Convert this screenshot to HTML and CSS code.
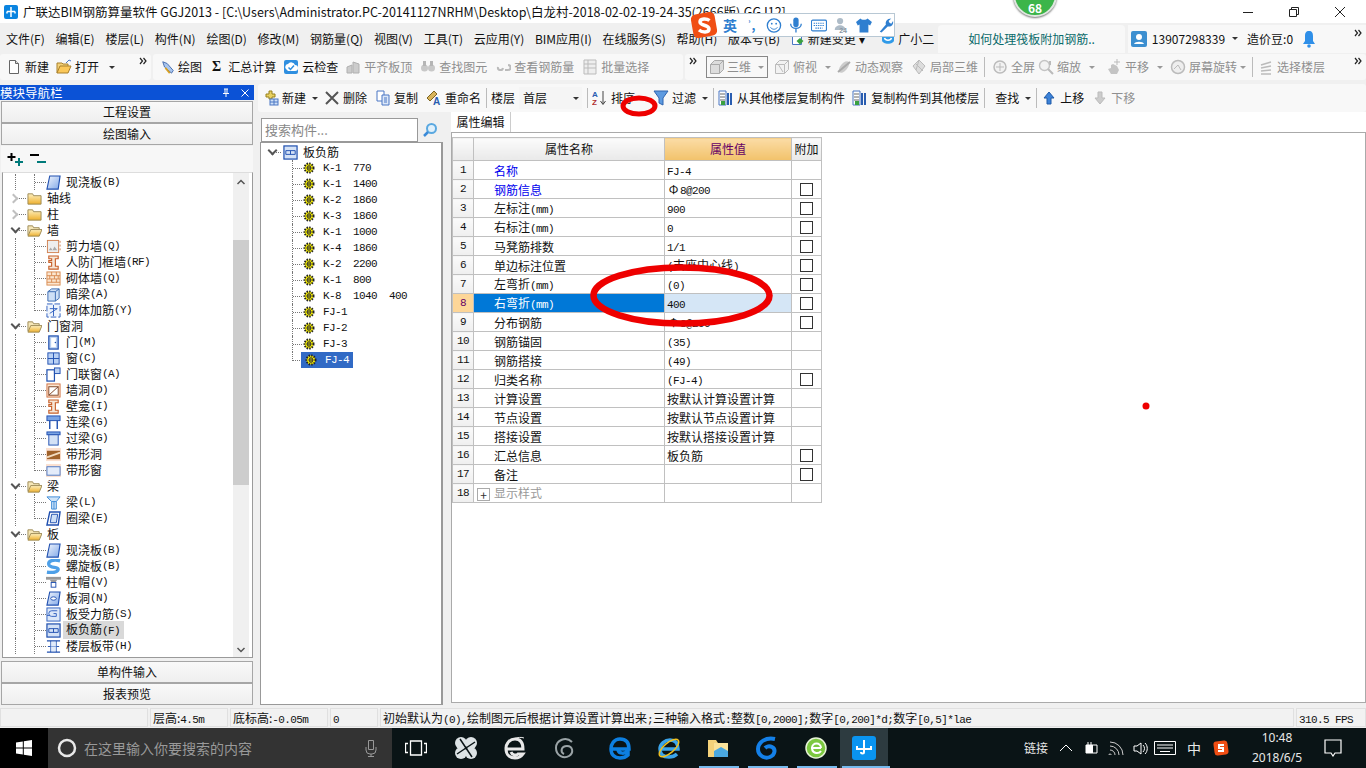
FILE: index.html
```html
<!DOCTYPE html>
<html lang="zh-CN">
<head>
    <meta charset="UTF-8">
    <title>广联达BIM钢筋算量软件 GGJ2013</title>
    <link rel="stylesheet" href="styles.css">
</head>
<body>
    <!-- 图标 -->
    <svg class="defs" width="0" height="0">
        <symbol id="i-doc" viewBox="0 0 16 16"><path d="M3.500 1.500h6l3 3v10h-9z" fill="#fff" stroke="#666"/><path d="M9.500 1.500v3h3" fill="#ddd" stroke="#666"/></symbol>
        <symbol id="i-open" viewBox="0 0 16 16"><path d="M1 14V4h5l1 1h5v2" fill="#f4d27a" stroke="#a9802c"/><path d="M1 14l3-7h11l-3 7z" fill="#fbc85a" stroke="#a9802c"/><path d="M10 4l3-3 2 1" fill="none" stroke="#4a77c4"/></symbol>
        <symbol id="i-draw" viewBox="0 0 16 16"><path d="M2 2l5 2 7 8-2 3-8-7z" fill="#a9c6ee" stroke="#3c63a8"/><path d="M5 9l5 6" stroke="#d8a020" stroke-width="2"/></symbol>
        <symbol id="i-cloud" viewBox="0 0 16 16"><rect x="1" y="1" width="14" height="14" rx="2" fill="#2f8fe0"/><path d="M3 10a3 3 0 0 1 2-5 4 4 0 0 1 7 1 3 3 0 0 1 0 6H5z" fill="#fff"/><path d="M5.500 8.500l2 2 3.500-4" stroke="#2f8fe0" stroke-width="1.500" fill="none"/></symbol>
        <symbol id="i-gray1" viewBox="0 0 16 16"><path d="M2 14V8l5-2v8zM8 14V3l6 2v9z" fill="#ccc" stroke="#b0b0b0"/></symbol>
        <symbol id="i-gray2" viewBox="0 0 16 16"><circle cx="4.500" cy="9" r="3.500" fill="#c8c8c8"/><circle cx="11.500" cy="9" r="3.500" fill="#c8c8c8"/><path d="M3 2h3v5H3zM10 2h3v5h-3z" fill="#b5b5b5"/></symbol>
        <symbol id="i-gray3" viewBox="0 0 16 16"><path d="M3 8a2.500 2.500 0 1 0 5 1M10 11h3a2 2 0 0 0 0-5" fill="none" stroke="#bbb" stroke-width="2"/></symbol>
        <symbol id="i-gray4" viewBox="0 0 16 16"><path d="M2 1h12v14H2zM2 5h12M2 9h12M6 1v14" fill="#eee" stroke="#bbb"/></symbol>
        <symbol id="i-cube" viewBox="0 0 16 16"><path d="M1.500 5.500l4-4h9v9l-4 4h-9z" fill="#ddd" stroke="#aaa"/><path d="M1.500 5.500h9v9M10.500 5.500l4-4" fill="none" stroke="#aaa"/></symbol>
        <symbol id="i-cube2" viewBox="0 0 16 16"><path d="M1.500 5.500l4-4h9v9l-4 4h-9z" fill="#f2f2f2" stroke="#bbb"/><path d="M1.500 5.500h9v9M10.500 5.500l4-4M4 5l5 8" fill="none" stroke="#bbb"/></symbol>
        <symbol id="i-orbit" viewBox="0 0 16 16"><ellipse cx="8" cy="8" rx="3.500" ry="7" transform="rotate(40 8 8)" fill="#ccc"/><path d="M2 13L14 3" stroke="#aaa" stroke-width="2"/></symbol>
        <symbol id="i-local" viewBox="0 0 16 16"><path d="M8 1l6 6-6 8-6-8z" fill="#ddd" stroke="#bbb"/><path d="M4 4l8 8M8 1L5 11" stroke="#bbb"/></symbol>
        <symbol id="i-full" viewBox="0 0 16 16"><circle cx="8" cy="8" r="6" fill="#f2f2f2" stroke="#bbb" stroke-width="1.500"/><path d="M8 4v8M4 8h8" stroke="#bbb"/></symbol>
        <symbol id="i-zoom" viewBox="0 0 16 16"><circle cx="6.500" cy="6.500" r="5" fill="#f2f2f2" stroke="#c4c4c4" stroke-width="1.500"/><path d="M10 10l5 5M12 2v4" stroke="#bbb" stroke-width="2"/></symbol>
        <symbol id="i-pan" viewBox="0 0 16 16"><path d="M5 15l-3-5 3-1V6l2-1 4 2 2 4-2 4z" fill="#c4c4c4"/><path d="M11 0v6M8 3h6" stroke="#bbb"/></symbol>
        <symbol id="i-rotate" viewBox="0 0 16 16"><circle cx="8" cy="8" r="6.500" fill="#eee" stroke="#bbb" stroke-width="1.500"/><path d="M4 10l4-4 3 5" fill="none" stroke="#bbb"/></symbol>
        <symbol id="i-floors" viewBox="0 0 16 16"><path d="M3 6l10-3M3 9l10-2M3 12l10-1M3 15h10" stroke="#bbb" stroke-width="1.500"/></symbol>
        <symbol id="i-new" viewBox="0 0 16 16"><path d="M6 1h3v3h3v3H9v2H6V7H3V4h3z" fill="#e8d060" stroke="#97801c"/><rect x="7" y="9" width="8" height="6" fill="#cfe0f6" stroke="#4a77c4"/><path d="M7 12h8M11 9v6" stroke="#4a77c4"/></symbol>
        <symbol id="i-x" viewBox="0 0 16 16"><path d="M2 2l12 12M14 2L2 14" stroke="#555" stroke-width="2"/></symbol>
        <symbol id="i-copy" viewBox="0 0 16 16"><path d="M2 1h7v10H2z" fill="#fff" stroke="#4a77c4"/><path d="M7 5h7v10H7z" fill="#dbe7f8" stroke="#4a77c4"/><path d="M9 8h3M9 10h3M9 12h3" stroke="#4a77c4"/></symbol>
        <symbol id="i-fromfloor" viewBox="0 0 16 16"><path d="M1 1h7v14H1z" fill="#fff" stroke="#4a77c4"/><path d="M2 4h5M2 7h5M2 10h5" stroke="#666"/><path d="M10 3v12M13 3v12" stroke="#2a5db0" stroke-width="2"/><path d="M3 11h4v4H3z" fill="#3aa040"/></symbol>
        <symbol id="i-filter" viewBox="0 0 16 16"><path d="M1 1h14L10 8v7l-4-2V8z" fill="#5d9ae0" stroke="#2f65b0"/></symbol>
        <symbol id="i-up" viewBox="0 0 16 16"><path d="M8 2l5 6h-3v6H6V8H3z" fill="#3c82d8" stroke="#1f5aa8"/></symbol>
        <symbol id="i-down" viewBox="0 0 16 16"><path d="M8 14l5-6h-3V2H6v6H3z" fill="#ccc" stroke="#bbb"/></symbol>

        <symbol id="t-closed" viewBox="0 0 16 16"><path d="M1 14V3h5l1 2h8v9z" fill="url(#g-folder)" stroke="#9c8a55"/></symbol>
        <symbol id="t-open" viewBox="0 0 16 16"><path d="M1 13V3h5l1 2h6v2" fill="#f6e7b8" stroke="#9c8a55"/><path d="M1 14l3-7h12l-3 7z" fill="url(#g-folder)" stroke="#9c8a55"/></symbol>
        <symbol id="t-slab" viewBox="0 0 16 16"><path d="M4 1h11l-2 14H1z" fill="url(#g-blue)" stroke="#2050b0" stroke-width="1.200"/></symbol>
        <symbol id="t-shear" viewBox="0 0 16 16"><rect x="1.500" y="1.500" width="12" height="13" fill="#eee" stroke="#d08050"/><path d="M3 12l2-3 2 3 2-4 3 4z" fill="#aaa"/><path d="M15 2v12" stroke="#d08050" stroke-dasharray="2 2"/></symbol>
        <symbol id="t-frame" viewBox="0 0 16 16"><path d="M3 1h10v3h-3v8h3v3H3v-3h3V8H3V6h3V4H3z" fill="#f6e6d6" stroke="#c8602a" stroke-width="1.200"/></symbol>
        <symbol id="t-brick" viewBox="0 0 16 16"><rect x="1" y="1" width="14" height="14" fill="#fbe6d0" stroke="#d88a50"/><path d="M1 5h14M1 8.500h14M1 12h14M6 1v4M11 1v4M4 5v3.500M9 5v3.500M13 5v3.500M6 8.500V12M11 8.500V12" stroke="#d88a50"/></symbol>
        <symbol id="t-beam" viewBox="0 0 16 16"><path d="M2 5l4-3h8v10l-4 3H2z" fill="#cfe0f6" stroke="#3a6ab0"/><path d="M2 5h8v10M10 5l4-3" fill="none" stroke="#3a6ab0"/></symbol>
        <symbol id="t-rebar" viewBox="0 0 16 16"><rect x="1" y="1" width="14" height="14" fill="#eef4fc" stroke="#3060c0" stroke-dasharray="6 2"/><path d="M4 6h8M8 2v12M4 11l8-5" stroke="#3060c0"/></symbol>
        <symbol id="t-door" viewBox="0 0 16 16"><rect x="3" y="1" width="10" height="14" fill="#b8cff0" stroke="#2050b0" stroke-width="1.300"/><rect x="5.500" y="3" width="5" height="10" fill="#fff"/><circle cx="10" cy="8" r=".8" fill="#2050b0"/></symbol>
        <symbol id="t-win" viewBox="0 0 16 16"><rect x="2" y="2" width="12" height="12" fill="#b8d0f4" stroke="#2050b0"/><path d="M8 2v12M2 8h12" stroke="#2050b0"/></symbol>
        <symbol id="t-doorwin" viewBox="0 0 16 16"><rect x="1" y="3" width="8" height="12" fill="#fff" stroke="#2050b0" stroke-width="1.300"/><rect x="9" y="1" width="6" height="6" fill="#b8d0f4" stroke="#2050b0"/></symbol>
        <symbol id="t-hole" viewBox="0 0 16 16"><rect x="1" y="1" width="14" height="14" fill="#fbe6d0" stroke="#d07040"/><rect x="3" y="4" width="10" height="9" fill="#fff" stroke="#804020"/><path d="M3 13l10-9" stroke="#804020"/></symbol>
        <symbol id="t-link" viewBox="0 0 16 16"><rect x="1" y="1" width="14" height="5" fill="#7aa4e4" stroke="#2050b0"/><path d="M4 6v9M12 6v9" stroke="#2050b0" stroke-width="1.500"/></symbol>
        <symbol id="t-lintel" viewBox="0 0 16 16"><rect x="1" y="1" width="14" height="3" fill="#7aa4e4" stroke="#2050b0"/><rect x="3" y="4" width="10" height="11" fill="#d4e2f6" stroke="#2050b0"/></symbol>
        <symbol id="t-bandh" viewBox="0 0 16 16"><path d="M0 1h16v14H0z" fill="#fbe0d0"/><rect x="1" y="4" width="14" height="9" fill="#a0622a"/><path d="M1 11l14-5" stroke="#f2dcc0" stroke-width="2"/></symbol>
        <symbol id="t-bandw" viewBox="0 0 16 16"><path d="M0 1h16v14H0z" fill="#fbe0d0"/><rect x="1" y="4" width="14" height="9" fill="#e4ecfa" stroke="#4a77c4"/></symbol>
        <symbol id="t-beaml" viewBox="0 0 16 16"><path d="M1 2h14l-4 5v8H6V7z" fill="#cfe4f8" stroke="#3a8ad8"/><path d="M6 7h5M8.500 7v8" stroke="#3a8ad8"/></symbol>
        <symbol id="t-ring" viewBox="0 0 16 16"><path d="M4 1h11l-2 14H1z" fill="#fff" stroke="#2050b0" stroke-width="1.500"/><path d="M6 3.500h6.500L11 12.500H4.500z" fill="#cfe0f6" stroke="#2050b0"/></symbol>
        <symbol id="t-spiral" viewBox="0 0 16 16"><path d="M15 2C8 0 2 2 3 6s10 2 10 5-6 4-12 3" fill="none" stroke="#4ea0e8" stroke-width="3.500"/></symbol>
        <symbol id="t-cap" viewBox="0 0 16 16"><rect x="0" y="2" width="16" height="3" fill="#999"/><path d="M4 5h8l-2 3H6z" fill="#999"/><rect x="5.500" y="8" width="5" height="5" fill="#fff" stroke="#2050b0"/></symbol>
        <symbol id="t-shole" viewBox="0 0 16 16"><path d="M4 1h11l-2 14H1z" fill="url(#g-blue)" stroke="#2050b0" stroke-width="1.200"/><ellipse cx="8" cy="8" rx="3" ry="1.800" fill="#fff" stroke="#2050b0"/></symbol>
        <symbol id="t-srebar" viewBox="0 0 16 16"><rect x="1" y="1" width="14" height="14" fill="#dce8f8" stroke="#3060c0"/><path d="M12 4H6a3 3 0 0 0 0 6h5V7H8" fill="none" stroke="#3060c0"/><path d="M1 9h3" stroke="#3060c0"/></symbol>
        <symbol id="t-neg" viewBox="0 0 16 16"><rect x="1" y="1" width="14" height="14" fill="#d4e2f6" stroke="#2050b0" stroke-width="1.300"/><path d="M3 6h10M3 10h10M8 6v4M3 6v4M13 6v4" fill="none" stroke="#2050b0"/></symbol>
        <symbol id="t-band" viewBox="0 0 16 16"><path d="M1 2h14M1 14h14" stroke="#2050b0" stroke-width="1.500"/><path d="M5 2v12M11 2v12M2 8h12" stroke="#2050b0"/><rect x="5" y="3" width="6" height="10" fill="#cfe0f6" opacity=".6"/></symbol>
        <symbol id="t-gear" viewBox="0 0 12 12"><circle cx="6" cy="6" r="4.500" fill="#f8f000" stroke="#222" stroke-width="2" stroke-dasharray="1.500 1.100"/><path d="M4.500 4h3v4h-3zM3 6h6M6 3v6" fill="none" stroke="#333" stroke-width=".8"/></symbol>
        <symbol id="t-more" viewBox="0 0 8 8"><path d="M1 1l2.500 3L1 7M4.500 1L7 4 4.500 7" fill="none" stroke="#222" stroke-width="1.200"/></symbol>
        <linearGradient id="g-folder" x1="0" y1="0" x2="0" y2="1"><stop offset="0" stop-color="#fdf0c0"/><stop offset="1" stop-color="#eeb02e"/></linearGradient>
        <linearGradient id="g-blue" x1="0" y1="0" x2="1" y2="1"><stop offset="0" stop-color="#f2f6fd"/><stop offset="1" stop-color="#80a8e8"/></linearGradient>
    </svg>

    <div class="app">
        <header class="titlebar">
            <svg class="app-logo" viewBox="0 0 14 14"><rect width="14" height="14" rx="2" fill="#0a84e0"/><path d="M7 2v10M3 6.500h8M3 6.500v2M11 6.500v2" stroke="#fff" stroke-width="1.500" fill="none"/></svg>
            <span class="title-text">广联达BIM钢筋算量软件 GGJ2013 - [C:\Users\Administrator.PC-20141127NRHM\Desktop\白龙村-2018-02-02-19-24-35(2666版).GGJ12]</span>
            <div class="win-btns">
                <svg viewBox="0 0 12 12"><path d="M1 6.500h10" stroke="#222"/></svg>
                <svg viewBox="0 0 12 12"><path d="M1.500 3.500h7v7h-7zM3.500 3.500v-2h7v7h-2" fill="none" stroke="#222"/></svg>
                <svg viewBox="0 0 12 12"><path d="M1 1l10 10M11 1L1 11" stroke="#222"/></svg>
            </div>
        </header>

        <nav class="menubar">
            <span>文件(F)</span><span>编辑(E)</span><span>楼层(L)</span><span>构件(N)</span><span>绘图(D)</span><span>修改(M)</span><span>钢筋量(Q)</span><span>视图(V)</span><span>工具(T)</span><span>云应用(Y)</span><span>BIM应用(I)</span><span>在线服务(S)</span><span>帮助(H)</span><span>版本号(B)</span>
            <span class="menu-change"><svg viewBox="0 0 14 14"><path d="M1.500 1.500h9v11h-9z" fill="#fff" stroke="#4a77c4"/><path d="M9 6l3.500 3L9 12.500 5.500 9z" fill="#3aa040"/></svg>新建变更 ▾</span>
            <span class="menu-xiao"><svg viewBox="0 0 14 14"><path d="M1 3c0-2 12-2 12 0v5c0 5-12 5-12 0z" fill="#2f9ae8"/><path d="M3.500 6c1 3 6 3 7 0" fill="none" stroke="#fff" stroke-width="1.500"/></svg>广小二</span>
            <div class="ask-box">如何处理筏板附加钢筋..</div>
            <div class="user-box">
                <svg class="ic" viewBox="0 0 16 16"><rect width="16" height="16" rx="2" fill="#3c8fd0"/><circle cx="8" cy="6" r="3" fill="#fff"/><path d="M3 13c1-3 9-3 10 0z" fill="#fff"/></svg>
                <span>13907298339</span>
                <span class="caret"></span>
                <span class="beans">造价豆:0</span>
                <svg class="bell" viewBox="0 0 14 18"><path d="M7 1c3 0 4 2 4 5v5l2 3H1l2-3V6c0-3 1-5 4-5z" fill="#2f8fe8"/><circle cx="7" cy="16" r="1.800" fill="#2f8fe8"/></svg>
                <svg class="more" viewBox="0 0 8 8"><use href="#t-more"/></svg>
            </div>
        </nav>

        <div class="toolbar">
            <div class="tool-seg seg-file">
                <span class="tb"><svg class="ic"><use href="#i-doc"/></svg>新建</span>
                <span class="tb ml7"><svg class="ic"><use href="#i-open"/></svg>打开</span>
                <span class="caret ml10"></span>
                <svg class="more ml24"><use href="#t-more"/></svg>
            </div>
            <div class="tool-seg seg-draw">
                <span class="tb"><svg class="ic ic-14"><use href="#i-draw"/></svg>绘图</span>
                <span class="tb ml10"><b class="sigma">Σ</b>汇总计算</span>
                <span class="tb ml7"><svg class="ic"><use href="#i-cloud"/></svg>云检查</span>
                <span class="tb ml7 off"><svg class="ic"><use href="#i-gray1"/></svg>平齐板顶</span>
                <span class="tb ml8 off"><svg class="ic"><use href="#i-gray2"/></svg>查找图元</span>
                <span class="tb ml8 off"><svg class="ic"><use href="#i-gray3"/></svg>查看钢筋量</span>
                <span class="tb ml8 off"><svg class="ic"><use href="#i-gray4"/></svg>批量选择</span>
            </div>
            <div class="tool-seg seg-view off">
                <svg class="more"><use href="#t-more"/></svg>
                <span class="combo-3d"><svg class="ic"><use href="#i-cube"/></svg>三维<span class="caret"></span></span>
                <span class="tb ml6"><svg class="ic"><use href="#i-cube2"/></svg>俯视<span class="caret ml5"></span></span>
                <span class="tb ml5"><svg class="ic"><use href="#i-orbit"/></svg>动态观察</span>
                <span class="tb ml8"><svg class="ic"><use href="#i-local"/></svg>局部三维</span>
                <span class="sep wide"></span>
                <span class="tb"><svg class="ic"><use href="#i-full"/></svg>全屏</span>
                <span class="tb ml3"><svg class="ic"><use href="#i-zoom"/></svg>缩放<span class="caret ml5"></span></span>
                <span class="tb ml11"><svg class="ic"><use href="#i-pan"/></svg>平移<span class="caret ml5"></span></span>
                <span class="tb ml7"><svg class="ic"><use href="#i-rotate"/></svg>屏幕旋转<span class="caret"></span></span>
                <span class="sep"></span>
                <span class="tb"><svg class="ic"><use href="#i-floors"/></svg>选择楼层</span>
                <svg class="more push"><use href="#t-more"/></svg>
            </div>
        </div>

        <div class="workspace">
            <aside class="nav-panel">
                <div class="nav-title">模块导航栏
                    <svg viewBox="0 0 10 10"><path d="M3 1h4M4 1v4M6 1v4M2 5.500h6M5 5.500V9" stroke="#fff" fill="none"/></svg>
                    <svg viewBox="0 0 10 10"><path d="M1.500 1.500l7 7M8.500 1.500l-7 7" stroke="#fff"/></svg>
                </div>
                <div class="nav-btn">工程设置</div>
                <div class="nav-btn">绘图输入</div>
                <div class="nav-tools">
                    <svg viewBox="0 0 18 18"><path d="M.5 6h8M4.500 2v8" stroke="#000" stroke-width="2"/><path d="M8 11h8M12 7v8" stroke="#007a7a" stroke-width="2"/></svg>
                    <svg viewBox="0 0 18 18"><path d="M0 4h9" stroke="#000" stroke-width="2"/><path d="M7 11h9" stroke="#007a7a" stroke-width="2"/></svg>
                </div>
                <div class="nav-tree">
                    <div class="tree-scroll">
                        <div class="row lv2 top"><i class="g"></i><i class="h"></i><svg class="ic"><use href="#t-slab"/></svg>现浇板<em>(B)</em></div>
                        <div class="row lv1"><i class="chev right"></i><i class="d"></i><svg class="ic"><use href="#t-closed"/></svg>轴线</div>
                        <div class="row lv1"><i class="chev right"></i><i class="d"></i><svg class="ic"><use href="#t-closed"/></svg>柱</div>
                        <div class="row lv1"><i class="chev"></i><i class="d"></i><svg class="ic"><use href="#t-open"/></svg>墙</div>
                        <div class="row lv2"><i class="g"></i><i class="h"></i><svg class="ic"><use href="#t-shear"/></svg>剪力墙<em>(Q)</em></div>
                        <div class="row lv2"><i class="g"></i><i class="h"></i><svg class="ic"><use href="#t-frame"/></svg>人防门框墙<em>(RF)</em></div>
                        <div class="row lv2"><i class="g"></i><i class="h"></i><svg class="ic"><use href="#t-brick"/></svg>砌体墙<em>(Q)</em></div>
                        <div class="row lv2"><i class="g"></i><i class="h"></i><svg class="ic"><use href="#t-beam"/></svg>暗梁<em>(A)</em></div>
                        <div class="row lv2"><i class="g"></i><i class="h end"></i><svg class="ic"><use href="#t-rebar"/></svg>砌体加筋<em>(Y)</em></div>
                        <div class="row lv1"><i class="chev"></i><i class="d"></i><svg class="ic"><use href="#t-open"/></svg>门窗洞</div>
                        <div class="row lv2"><i class="g"></i><i class="h"></i><svg class="ic"><use href="#t-door"/></svg>门<em>(M)</em></div>
                        <div class="row lv2"><i class="g"></i><i class="h"></i><svg class="ic"><use href="#t-win"/></svg>窗<em>(C)</em></div>
                        <div class="row lv2"><i class="g"></i><i class="h"></i><svg class="ic"><use href="#t-doorwin"/></svg>门联窗<em>(A)</em></div>
                        <div class="row lv2"><i class="g"></i><i class="h"></i><svg class="ic"><use href="#t-hole"/></svg>墙洞<em>(D)</em></div>
                        <div class="row lv2"><i class="g"></i><i class="h"></i><svg class="ic"><use href="#t-frame"/></svg>壁龛<em>(I)</em></div>
                        <div class="row lv2"><i class="g"></i><i class="h"></i><svg class="ic"><use href="#t-link"/></svg>连梁<em>(G)</em></div>
                        <div class="row lv2"><i class="g"></i><i class="h"></i><svg class="ic"><use href="#t-lintel"/></svg>过梁<em>(G)</em></div>
                        <div class="row lv2"><i class="g"></i><i class="h"></i><svg class="ic"><use href="#t-bandh"/></svg>带形洞</div>
                        <div class="row lv2"><i class="g"></i><i class="h end"></i><svg class="ic"><use href="#t-bandw"/></svg>带形窗</div>
                        <div class="row lv1"><i class="chev"></i><i class="d"></i><svg class="ic"><use href="#t-open"/></svg>梁</div>
                        <div class="row lv2"><i class="g"></i><i class="h"></i><svg class="ic"><use href="#t-beaml"/></svg>梁<em>(L)</em></div>
                        <div class="row lv2"><i class="g"></i><i class="h end"></i><svg class="ic"><use href="#t-ring"/></svg>圈梁<em>(E)</em></div>
                        <div class="row lv1"><i class="chev"></i><i class="d"></i><svg class="ic"><use href="#t-open"/></svg>板</div>
                        <div class="row lv2"><i class="g"></i><i class="h"></i><svg class="ic"><use href="#t-slab"/></svg>现浇板<em>(B)</em></div>
                        <div class="row lv2"><i class="g"></i><i class="h"></i><svg class="ic"><use href="#t-spiral"/></svg>螺旋板<em>(B)</em></div>
                        <div class="row lv2"><i class="g"></i><i class="h"></i><svg class="ic"><use href="#t-cap"/></svg>柱帽<em>(V)</em></div>
                        <div class="row lv2"><i class="g"></i><i class="h"></i><svg class="ic"><use href="#t-shole"/></svg>板洞<em>(N)</em></div>
                        <div class="row lv2"><i class="g"></i><i class="h"></i><svg class="ic"><use href="#t-srebar"/></svg>板受力筋<em>(S)</em></div>
                        <div class="row lv2"><i class="g"></i><i class="h"></i><svg class="ic"><use href="#t-neg"/></svg><span class="cur">板负筋<em>(F)</em></span></div>
                        <div class="row lv2"><i class="g"></i><i class="h"></i><svg class="ic"><use href="#t-band"/></svg>楼层板带<em>(H)</em></div>
                    </div>
                    <div class="scrollbar">
                        <svg class="sb-arrow" viewBox="0 0 10 6"><path d="M1.500 5L5 1.500 8.500 5" fill="none" stroke="#555" stroke-width="1.500"/></svg>
                        <div class="sb-thumb"></div>
                        <svg class="sb-arrow end" viewBox="0 0 10 6"><path d="M1.500 1L5 4.500 8.500 1" fill="none" stroke="#555" stroke-width="1.500"/></svg>
                    </div>
                </div>
                <div class="nav-btn gap">单构件输入</div>
                <div class="nav-btn">报表预览</div>
            </aside>

            <section class="main">
                <div class="toolbar2">
                    <span class="tb"><svg class="ic"><use href="#i-new"/></svg>新建<span class="caret dark ml3"></span></span>
                    <span class="tb ml6"><svg class="ic"><use href="#i-x"/></svg>删除</span>
                    <span class="tb ml8"><svg class="ic"><use href="#i-copy"/></svg>复制</span>
                    <span class="tb ml8"><svg class="ic" viewBox="0 0 16 16"><path d="M1 8l7-7 3 3-7 7z" fill="#d8b35a" stroke="#7c6420"/><text x="7" y="15" font-size="10" font-weight="700" fill="#2a5db0" font-family="Liberation Sans">A</text></svg>重命名</span>
                    <span class="sep"></span>
                    <span>楼层</span>
                    <span class="floor-combo">首层<span class="caret dark"></span></span>
                    <span class="sep"></span>
                    <span class="tb"><svg class="ic" viewBox="0 0 16 16"><text x="0" y="7" font-size="8" font-weight="700" fill="#2a5db0" font-family="Liberation Sans">A</text><text x="0" y="15" font-size="8" font-weight="700" fill="#b03030" font-family="Liberation Sans">Z</text><path d="M11 1v13M8.500 11l2.500 3.500 2.500-3.500" fill="none" stroke="#444"/></svg>排序</span>
                    <span class="tb ml18"><svg class="ic"><use href="#i-filter"/></svg>过滤<span class="caret dark ml3"></span></span>
                    <span class="sep"></span>
                    <span class="tb"><svg class="ic"><use href="#i-fromfloor"/></svg>从其他楼层复制构件</span>
                    <span class="tb ml7"><svg class="ic"><use href="#i-fromfloor"/></svg>复制构件到其他楼层</span>
                    <span class="sep"></span>
                    <span class="tb ml6">查找<span class="caret dark ml3"></span></span>
                    <span class="sep"></span>
                    <span class="tb"><svg class="ic"><use href="#i-up"/></svg>上移</span>
                    <span class="tb ml8 off"><svg class="ic"><use href="#i-down"/></svg>下移</span>
                </div>

                <div class="content">
                    <div class="comp-panel">
                        <div class="search-row">
                            <div class="search-box">搜索构件...</div>
                            <svg class="search-btn" viewBox="0 0 16 16"><circle cx="9.500" cy="6.500" r="4.500" fill="#e0f0fb" stroke="#5aa8e0" stroke-width="2"/><path d="M6 10l-4 4" stroke="#3a8ad8" stroke-width="2.500"/></svg>
                        </div>
                        <div class="comp-tree">
                            <div class="row root"><i class="chev"></i><i class="d"></i><svg class="ic"><use href="#t-neg"/></svg>板负筋</div>
                            <div class="row leaf"><i class="h"></i><svg class="gear"><use href="#t-gear"/></svg><em>K-1&nbsp;&nbsp;770</em></div>
                            <div class="row leaf"><i class="h"></i><svg class="gear"><use href="#t-gear"/></svg><em>K-1&nbsp;&nbsp;1400</em></div>
                            <div class="row leaf"><i class="h"></i><svg class="gear"><use href="#t-gear"/></svg><em>K-2&nbsp;&nbsp;1860</em></div>
                            <div class="row leaf"><i class="h"></i><svg class="gear"><use href="#t-gear"/></svg><em>K-3&nbsp;&nbsp;1860</em></div>
                            <div class="row leaf"><i class="h"></i><svg class="gear"><use href="#t-gear"/></svg><em>K-1&nbsp;&nbsp;1000</em></div>
                            <div class="row leaf"><i class="h"></i><svg class="gear"><use href="#t-gear"/></svg><em>K-4&nbsp;&nbsp;1860</em></div>
                            <div class="row leaf"><i class="h"></i><svg class="gear"><use href="#t-gear"/></svg><em>K-2&nbsp;&nbsp;2200</em></div>
                            <div class="row leaf"><i class="h"></i><svg class="gear"><use href="#t-gear"/></svg><em>K-1&nbsp;&nbsp;800</em></div>
                            <div class="row leaf"><i class="h"></i><svg class="gear"><use href="#t-gear"/></svg><em>K-8&nbsp;&nbsp;1040&nbsp;&nbsp;400</em></div>
                            <div class="row leaf"><i class="h"></i><svg class="gear"><use href="#t-gear"/></svg><em>FJ-1</em></div>
                            <div class="row leaf"><i class="h"></i><svg class="gear"><use href="#t-gear"/></svg><em>FJ-2</em></div>
                            <div class="row leaf"><i class="h"></i><svg class="gear"><use href="#t-gear"/></svg><em>FJ-3</em></div>
                            <div class="row leaf last"><i class="h end"></i><span class="sel"><svg class="gear"><use href="#t-gear"/></svg><em>FJ-4</em></span></div>
                        </div>
                    </div>

                    <div class="prop-panel">
                        <div class="tabs"><span class="tab">属性编辑</span></div>
                        <div class="prop-body">
                            <table class="prop-table">
                                <colgroup><col class="c-no"><col class="c-name"><col class="c-val"><col class="c-add"></colgroup>
                                <tr class="head"><th></th><th>属性名称</th><th class="val-head">属性值</th><th>附加</th></tr>
                                <tr><td class="no">1</td><td class="link">名称</td><td class="v"><em>FJ-4</em></td><td></td></tr>
                                <tr><td class="no">2</td><td class="link">钢筋信息</td><td class="v"><span class="bar">Φ</span><em>8@200</em></td><td><span class="cb"></span></td></tr>
                                <tr><td class="no">3</td><td>左标注<em>(mm)</em></td><td class="v"><em>900</em></td><td><span class="cb"></span></td></tr>
                                <tr><td class="no">4</td><td>右标注<em>(mm)</em></td><td class="v"><em>0</em></td><td><span class="cb"></span></td></tr>
                                <tr><td class="no">5</td><td>马凳筋排数</td><td class="v"><em>1/1</em></td><td><span class="cb"></span></td></tr>
                                <tr><td class="no">6</td><td>单边标注位置</td><td class="v"><em>(</em>支座中心线<em>)</em></td><td><span class="cb"></span></td></tr>
                                <tr><td class="no">7</td><td>左弯折<em>(mm)</em></td><td class="v"><em>(0)</em></td><td><span class="cb"></span></td></tr>
                                <tr class="cur-row"><td class="no">8</td><td>右弯折<em>(mm)</em></td><td class="v"><em>400</em></td><td><span class="cb"></span></td></tr>
                                <tr><td class="no">9</td><td>分布钢筋</td><td class="v"><span class="bar">Φ</span><em>8@200</em></td><td><span class="cb"></span></td></tr>
                                <tr><td class="no">10</td><td>钢筋锚固</td><td class="v"><em>(35)</em></td><td></td></tr>
                                <tr><td class="no">11</td><td>钢筋搭接</td><td class="v"><em>(49)</em></td><td></td></tr>
                                <tr><td class="no">12</td><td>归类名称</td><td class="v"><em>(FJ-4)</em></td><td><span class="cb"></span></td></tr>
                                <tr><td class="no">13</td><td>计算设置</td><td class="v">按默认计算设置计算</td><td></td></tr>
                                <tr><td class="no">14</td><td>节点设置</td><td class="v">按默认节点设置计算</td><td></td></tr>
                                <tr><td class="no">15</td><td>搭接设置</td><td class="v">按默认搭接设置计算</td><td></td></tr>
                                <tr><td class="no">16</td><td>汇总信息</td><td class="v">板负筋</td><td><span class="cb"></span></td></tr>
                                <tr><td class="no">17</td><td>备注</td><td class="v"></td><td><span class="cb"></span></td></tr>
                                <tr><td class="no">18</td><td class="style-cell"><span class="plus">+</span>显示样式</td><td class="v"></td><td></td></tr>
                            </table>
                        </div>
                    </div>
                </div>
            </section>
        </div>

        <footer class="statusbar">
            <div class="st s0"></div>
            <div class="st s1">层高:<em>4.5m</em></div>
            <div class="st s2">底标高:<em>-0.05m</em></div>
            <div class="st s3"><em>0</em></div>
            <div class="st s4">初始默认为<em>(0),</em>绘制图元后根据计算设置计算出来<em>;</em>三种输入格式<em>:</em>整数<em>[0,2000];</em>数字<em>[0,200]*d;</em>数字<em>[0,5]*lae</em></div>
            <div class="st s5"><em>310.5 FPS</em></div>
        </footer>

        <div class="taskbar">
            <div class="start"><svg viewBox="0 0 16 16"><path d="M0 2.500l6.800-1v6H0zM7.800 1.300L16 0v7.500H7.800zM0 8.500h6.800v6l-6.800-1zM7.800 8.500H16V16l-8.200-1.300z" fill="#fff"/></svg></div>
            <div class="task-search">
                <svg class="cortana" viewBox="0 0 20 20"><circle cx="10" cy="10" r="8" fill="none" stroke="#e8e8e8" stroke-width="2.500"/></svg>
                <span>在这里输入你要搜索的内容</span>
                <svg class="mic" viewBox="0 0 12 18"><path d="M3.500 1.500h5v9h-5zM1 8v3a4 4 0 0 0 4 4h2a4 4 0 0 0 4-4V8M6 15v2M3 17.500h6" fill="none" stroke="#999"/></svg>
            </div>
            <div class="task-apps">
                <svg class="t-view" viewBox="0 0 22 16"><path d="M5.500 1h11v14h-11zM3 3.500H.5v9H3M19 3.500h2.500v9H19" fill="none" stroke="#fff" stroke-width="1.300"/></svg>
                <svg class="t-app" viewBox="0 0 24 24"><g fill="#dde3e5"><circle cx="7" cy="7" r="6"/><circle cx="17" cy="7" r="6"/><circle cx="7" cy="17" r="6"/><circle cx="17" cy="17" r="6"/></g><path d="M12 12L6 3M12 12l9-6M12 12l6 9M12 12l-9 6" stroke="#0a1416" stroke-width="1.500"/></svg>
                <svg class="t-app" viewBox="0 0 24 24"><path d="M3 13h17c0-7-3-10-8-10S3 7 3 13c0 6 4 9 9 9 4 0 6-1 8-4h-5c-2 2-6 1-7-2" fill="none" stroke="#e8e8e8" stroke-width="3"/><path d="M2 10C6 3 16 0 21 2" fill="none" stroke="#e8e8e8"/></svg>
                <svg class="t-app" viewBox="0 0 24 24"><path d="M20 6C14 0 4 4 4 12s8 11 13 8 4-10-2-10-7 6-3 8" fill="none" stroke="#9aa3a6" stroke-width="2"/></svg>
                <svg class="t-app edge" viewBox="0 0 24 24"><path d="M3 13h18c0-7-3-10-9-10S3 8 3 13c0 6 4 9 9 9 3 0 6-1 8-3v-4c-3 3-9 3-10-1" fill="#0a1416" stroke="#0d7fe0" stroke-width="3.500"/></svg>
                <svg class="t-app" viewBox="0 0 24 24"><path d="M3 13h18c0-6-3-9-8-9S3 8 3 13c0 6 4 8 9 8 3 0 6-1 8-3" fill="none" stroke="#3aa4ea" stroke-width="3.500"/><ellipse cx="12" cy="12" rx="12" ry="5" transform="rotate(-40 12 12)" fill="none" stroke="#f0c020" stroke-width="1.500"/></svg>
                <svg class="t-app" viewBox="0 0 24 24"><path d="M2 4h8l2 3v14H2z" fill="#f4d27a"/><path d="M8 7h14v14H8z" fill="#fbe39a"/><path d="M8 21v-6l7-4 7 4v6z" fill="#4aa8e0"/></svg>
                <svg class="t-app" viewBox="0 0 24 24"><path d="M20 3C11 1 3 6 3 13s7 10 12 8 6-8 2-10-7 1-7 1" fill="none" stroke="#1480e8" stroke-width="4"/></svg>
                <svg class="t-app" viewBox="0 0 24 24"><circle cx="12" cy="12" r="10" fill="#7cc840" stroke="#e8f4d8" stroke-width="1.500"/><path d="M7 12h10M8 12c0-6 9-6 9 0M8 13c1 5 7 5 9 2" fill="none" stroke="#fff" stroke-width="2"/></svg>
                <div class="t-active"><svg viewBox="0 0 24 24"><rect width="24" height="24" rx="3" fill="#0a94f0"/><path d="M12 4v12c0 2-3 2-3 0M5 10v3h14v-3" fill="none" stroke="#fff" stroke-width="2"/></svg></div>
                <i class="mark m1"></i><i class="mark m2"></i><i class="mark m3"></i><i class="mark m4"></i>
            </div>
            <div class="tray">
                <span class="tray-link">链接</span>
                <svg viewBox="0 0 14 8" class="t-s1"><path d="M1 7l6-6 6 6" fill="none" stroke="#fff"/></svg>
                <svg viewBox="0 0 16 14" class="t-s2"><path d="M3 4h11v8H3z" fill="none" stroke="#fff"/><path d="M3 4h7v8H3z" fill="#fff"/><path d="M5 1v3M8 1v3" stroke="#fff"/></svg>
                <svg viewBox="0 0 16 14" class="t-s2"><path d="M2 13a1 1 0 1 0 .1 0M2 9a5 5 0 0 1 5 5M2 5a9 9 0 0 1 9 9M2 1a13 13 0 0 1 13 13" fill="none" stroke="#ccc"/></svg>
                <svg viewBox="0 0 16 14" class="t-s2"><path d="M1 5h3l4-3v11l-4-3H1zM10 4c2 2 2 5 0 7M12 2c3 3 3 8 0 11" fill="none" stroke="#fff"/></svg>
                <svg viewBox="0 0 22 14" class="t-kb"><path d="M.5.500h21v13H.5zM3 4h16M3 7h16M6 10.500h10" fill="none" stroke="#fff"/></svg>
                <span class="tray-ime">中</span>
                <svg viewBox="0 0 16 16" class="t-s"><rect x="1" y="1" width="14" height="14" rx="3" fill="#f04e14" transform="rotate(-8 8 8)"/><path d="M11 5H6v3h4v3H5" fill="none" stroke="#fff" stroke-width="2"/></svg>
                <div class="clock"><span>10:48</span><span>2018/6/5</span></div>
                <svg viewBox="0 0 18 18" class="t-note"><path d="M1 1h16v13h-6l-2 3-2-3H1z" fill="none" stroke="#fff" stroke-width="1.200"/></svg>
            </div>
        </div>
    </div>

    <!-- 输入法悬浮条 -->
    <div class="ime-bar">
        <svg class="ime-logo" viewBox="0 0 28 28"><rect x="2" y="2" width="24" height="24" rx="5" fill="#f04e14" transform="rotate(-10 14 14)"/><path d="M19.500 9.500C17 7.500 10 7 10 11c0 4 9 2.500 9 7 0 4-7 3.500-10 1" fill="none" stroke="#fff" stroke-width="3.500"/></svg>
        <div class="ime-items">
            <span class="ime-en">英</span>
            <span class="ime-punc">ʾ,</span>
            <svg viewBox="0 0 18 18"><circle cx="9" cy="9" r="7.500" fill="none" stroke="#2f7fd0" stroke-width="1.500"/><circle cx="6.500" cy="7" r="1" fill="#2f7fd0"/><circle cx="11.500" cy="7" r="1" fill="#2f7fd0"/><path d="M5 11c2 3 6 3 8 0" fill="none" stroke="#2f7fd0"/></svg>
            <svg viewBox="0 0 18 18"><rect x="6" y="0" width="6" height="11" rx="3" fill="#2f7fd0"/><path d="M3 7c0 7 12 7 12 0M9 13v4" fill="none" stroke="#2f7fd0" stroke-width="1.500"/></svg>
            <svg viewBox="0 0 18 18"><rect x=".5" y="3" width="17" height="12" rx="1.500" fill="none" stroke="#2f7fd0" stroke-width="1.300"/><path d="M3 6.500h12M3 9h12M5 12h8" stroke="#2f7fd0" stroke-width="1.300" stroke-dasharray="1.500 1"/></svg>
            <svg viewBox="0 0 18 18"><circle cx="8" cy="4" r="3.500" fill="#aebcc8"/><path d="M2 14c0-7 12-7 12 0z" fill="#aebcc8"/><text x="7" y="17" font-size="8" font-weight="700" fill="#8a98a4" font-family="Liberation Sans">24</text></svg>
            <svg viewBox="0 0 18 18"><path d="M5 1L0 5l2 4 2-1v9h10V8l2 1 2-4-5-4c-1 2-7 2-8 0z" fill="#2f7fd0"/></svg>
            <svg viewBox="0 0 18 18"><path d="M2 16L9 8c-1-3 1-7 6-7l-3 3 1 2 2 1 2-3c1 5-3 7-6 6l-7 7z" fill="#2f7fd0"/></svg>
        </div>
    </div>

    <div class="score-badge"><span>68</span></div>

    <!-- 红色标注 -->
    <svg class="marks" viewBox="0 0 1366 768">
        <ellipse cx="639" cy="106" rx="16" ry="8" fill="none" stroke="#ee0000" stroke-width="5"/>
        <ellipse cx="681.500" cy="295.500" rx="88" ry="28" fill="none" stroke="#ee0000" stroke-width="6.500"/>
        <circle cx="1146" cy="406" r="3.500" fill="#ee0000"/>
    </svg>
</body>
</html>
```

FILE: styles.css
```css
* {
    margin: 0;
    padding: 0;
    box-sizing: border-box;
}

body {
    width: 1366px;
    height: 768px;
    overflow: hidden;
    background: #f0f0f0;
    color: #111;
    font-family: "Noto Sans CJK SC", "Liberation Sans", sans-serif;
    font-size: 12px;
    line-height: 16px;
}

.defs {
    position: absolute;
}

.app {
    height: 768px;
    display: flex;
    flex-direction: column;
}

em {
    font-family: "Liberation Mono", monospace;
    font-style: normal;
    font-size: 11px;
    letter-spacing: -0.6px;
}

.ic {
    width: 16px;
    height: 16px;
    flex: none;
}

.ic-14 {
    width: 14px;
    height: 14px;
}

.more {
    width: 8px;
    height: 8px;
    flex: none;
}

.caret {
    display: inline-block;
    width: 0;
    height: 0;
    border-left: 3px solid transparent;
    border-right: 3px solid transparent;
    border-top: 3px solid #333;
    flex: none;
}

.off .caret {
    border-top-color: #999;
}

.ml3 { margin-left: 3px; }
.ml5 { margin-left: 5px; }
.ml6 { margin-left: 6px; }
.ml7 { margin-left: 7px; }
.ml8 { margin-left: 8px; }
.ml10 { margin-left: 10px; }
.ml11 { margin-left: 11px; }
.ml18 { margin-left: 18px; }
.ml24 { margin-left: 24px; }

/* 标题栏 */
.titlebar {
    height: 23px;
    background: #fff;
    display: flex;
    align-items: center;
    padding-left: 4px;
}

.app-logo {
    width: 14px;
    height: 14px;
    margin-right: 5px;
}

.title-text {
    font-size: 12.5px;
    white-space: nowrap;
}

.win-btns {
    margin-left: auto;
    display: flex;
    gap: 34px;
    padding-right: 20px;
}

.win-btns svg {
    width: 12px;
    height: 12px;
}

/* 菜单栏 */
.menubar {
    height: 31px;
    display: flex;
    align-items: center;
    padding-left: 6px;
    gap: 10.75px;
    white-space: nowrap;
}

.menu-change,
.menu-xiao {
    display: inline-flex;
    align-items: center;
    gap: 3px;
}

.menu-change svg,
.menu-xiao svg {
    width: 14px;
    height: 14px;
}

.menu-xiao {
    margin-left: 6px;
}

.ask-box {
    width: 187px;
    height: 28px;
    margin-left: -7px;
    background: #f8f8f8;
    border-radius: 4px 4px 0 0;
    color: #0a6a6a;
    line-height: 28px;
    text-align: center;
}

.user-box {
    flex: 1;
    height: 28px;
    margin-left: -8px;
    background: #f8f8f8;
    display: flex;
    align-items: center;
    padding-left: 3px;
}

.user-box span:nth-of-type(1) {
    margin-left: 5px;
}

.user-box .caret {
    margin-left: 7px;
}

.beans {
    margin-left: 9px;
}

.bell {
    width: 14px;
    height: 18px;
    margin-left: 9px;
}

.user-box .more {
    margin-left: auto;
    margin-right: 4px;
    align-self: flex-start;
    margin-top: 4px;
}

/* 工具栏 */
.toolbar {
    height: 26px;
    margin-bottom: 4px;
    display: flex;
    gap: 2px;
    white-space: nowrap;
}

.tool-seg {
    display: flex;
    align-items: center;
    background: #f8f8f8;
    border-radius: 3px;
}

.tool-seg .more {
    align-self: flex-start;
    margin-top: 3px;
}

.seg-file {
    width: 151px;
    padding-left: 6px;
}

.seg-draw {
    width: 530px;
    padding-left: 8px;
}

.seg-view {
    flex: 1;
    padding-left: 4px;
}

.tb {
    display: inline-flex;
    align-items: center;
    gap: 3px;
}

.off {
    color: #8f8f8f;
}

.sigma {
    font-family: "Liberation Serif", serif;
    font-size: 14px;
    margin-right: 4px;
}

.combo-3d {
    width: 62px;
    height: 22px;
    margin-left: 9px;
    border: 1px solid #888;
    display: inline-flex;
    align-items: center;
    gap: 2px;
    padding-left: 2px;
}

.combo-3d .caret {
    margin-left: 5px;
}

.sep {
    width: 1px;
    height: 20px;
    margin: 0 5px 0 6px;
    background: #bbb;
    flex: none;
}

.sep.wide {
    margin-right: 7px;
}

.toolbar2 .sep {
    margin: 0 4px 0 5px;
}

.push {
    margin-left: auto;
    margin-right: 4px;
}

/* 左侧导航 */
.workspace {
    flex: 1;
    display: flex;
    min-height: 0;
}

.nav-panel {
    width: 254px;
    flex: none;
    padding-top: 1px;
}

.nav-title {
    height: 15px;
    background: #0b52d6;
    color: #fff;
    display: flex;
    align-items: center;
    font-size: 12.5px;
}

.nav-title svg {
    width: 10px;
    height: 10px;
    margin-left: 9px;
}

.nav-title svg:first-of-type {
    margin-left: auto;
}

.nav-title svg:last-of-type {
    margin-right: 4px;
}

.nav-btn {
    height: 22px;
    margin: 1px 1px 0;
    background: linear-gradient(#f9f9f9, #efefef);
    border: 1px solid #a6a6a6;
    text-align: center;
    line-height: 20px;
}

.nav-btn + .nav-btn {
    margin-top: 0;
}

.nav-btn.gap {
    margin-top: 3px;
}

.nav-tools {
    height: 26px;
    margin: 1px 1px 0;
    padding: 5px 0 0 6px;
    display: flex;
    gap: 5px;
    background: #f7f7f7;
}

.nav-tools svg {
    width: 18px;
    height: 18px;
}

.nav-tree {
    height: 486px;
    margin: 0 1px 0 2px;
    border: 1px solid #9a9a9a;
    border-top-color: #ddd;
    background: #fff;
    display: flex;
    overflow: hidden;
}

.tree-scroll {
    flex: 1;
    padding-top: 1px;
}

.row {
    height: 16px;
    display: flex;
    align-items: center;
    white-space: nowrap;
}

.row .ic {
    width: 15px;
    height: 15px;
    margin-right: 5px;
}

.lv1 {
    padding-left: 8px;
}

.chev {
    width: 8px;
    height: 8px;
    flex: none;
    position: relative;
}

.chev::before {
    content: "";
    position: absolute;
    left: 1px;
    top: -1px;
    width: 5px;
    height: 5px;
    border-right: 2px solid #555;
    border-bottom: 2px solid #555;
    transform: rotate(45deg);
}

.chev.right::before {
    left: -1px;
    top: 1px;
    border-color: #c0c0c0;
    transform: rotate(-45deg);
}

.d {
    width: 7px;
    height: 1px;
    margin-right: 1px;
    flex: none;
    background: repeating-linear-gradient(90deg, #777 0 1px, transparent 1px 2px);
}

.g {
    width: 19px;
    height: 16px;
    margin-left: 12px;
    flex: none;
    border-left: 1px dotted #777;
}

.h {
    width: 12px;
    height: 16px;
    flex: none;
    border-left: 1px dotted #777;
    background: repeating-linear-gradient(90deg, #777 0 1px, transparent 1px 2px) 0 8px / 100% 1px no-repeat;
}

.h.end {
    height: 9px;
    align-self: flex-start;
}

.cur {
    background: #d9d9d9;
    margin-left: -3px;
    padding-left: 3px;
    padding-right: 4px;
}

.scrollbar {
    width: 16px;
    flex: none;
    margin-right: 3px;
    background: #f0f0f0;
    display: flex;
    flex-direction: column;
    align-items: center;
}

.sb-arrow {
    width: 10px;
    height: 6px;
    margin: 6px 0;
    flex: none;
}

.sb-arrow.end {
    margin-top: auto;
    margin-bottom: 4px;
}

.sb-thumb {
    width: 16px;
    height: 245px;
    margin-top: 49px;
    background: #cdcdcd;
}

/* 构件栏 */
.main {
    flex: 1;
    display: flex;
    flex-direction: column;
    min-width: 0;
}

.toolbar2 {
    height: 28px;
    margin-left: 4px;
    display: flex;
    align-items: center;
    background: #f8f8f8;
    padding-left: 5px;
    white-space: nowrap;
    border-radius: 3px;
}

.floor-combo {
    width: 63px;
    height: 22px;
    margin-left: 4px;
    padding-left: 4px;
    background: #f5f5f5;
    display: inline-flex;
    align-items: center;
    justify-content: space-between;
    padding-right: 3px;
}

.content {
    flex: 1;
    display: flex;
    min-height: 0;
}

.comp-panel {
    width: 183px;
    margin-left: 6px;
    flex: none;
    display: flex;
    flex-direction: column;
    padding-top: 5px;
}

.search-row {
    display: flex;
    height: 25px;
    align-items: center;
}

.search-box {
    width: 157px;
    height: 24px;
    margin-left: 1px;
    border: 1px solid #999;
    background: #fff;
    color: #888;
    font-size: 13px;
    line-height: 22px;
    padding-left: 3px;
}

.search-btn {
    width: 16px;
    height: 16px;
    margin-left: 4px;
}

.comp-tree {
    flex: 1;
    background: #fff;
    border: 1px solid #999;
    border-width: 1px 2px 1px 1px;
    padding-top: 1px;
    margin-bottom: 1px;
}

.root {
    padding-left: 7px;
}

.root .d {
    width: 6px;
}

.leaf {
    padding-left: 31px;
}

.leaf .h {
    width: 11px;
}

.gear {
    width: 12px;
    height: 12px;
    flex: none;
    margin-right: 8px;
}

.leaf .sel {
    display: flex;
    align-items: center;
    height: 16px;
    background: #316ac5;
    color: #fff;
    margin-left: -2px;
    padding: 0 4px 0 4px;
}

/* 属性编辑 */
.prop-panel {
    flex: 1;
    margin-left: 8px;
    min-width: 0;
    display: flex;
    flex-direction: column;
    margin-bottom: 3px;
}

.tabs {
    height: 20px;
    flex: none;
    background: #fff;
}

.tab {
    display: block;
    width: 60px;
    height: 20px;
    background: #fff;
    border-right: 1px solid #ccc;
    line-height: 20px;
    text-align: center;
}

.prop-body {
    flex: 1;
    background: #fff;
    border: 1px solid #aaa;
    padding-top: 4px;
}

.prop-table {
    border-collapse: collapse;
    table-layout: fixed;
    width: 369px;
}

.c-no { width: 21px; }
.c-name { width: 191px; }
.c-val { width: 127px; }
.c-add { width: 30px; }

.prop-table th,
.prop-table td {
    border: 1px solid #c0c0c0;
    height: 19px;
    padding: 0;
    font-weight: 400;
    white-space: nowrap;
    overflow: hidden;
}

.prop-table td {
    padding: 1px 0 0 20px;
    line-height: 14px;
}

.prop-table td.no {
    padding: 0;
    text-align: center;
    background: linear-gradient(#fafafa, #efefef);
    font-family: "Liberation Mono", monospace;
    font-size: 11px;
    letter-spacing: -0.6px;
}

.prop-table td.v {
    padding-left: 2px;
}

.prop-table td:last-child {
    padding: 0;
    text-align: center;
}

.prop-table .head th {
    height: 23px;
    background: linear-gradient(#fbfbfb, #e9e9e9);
}

.prop-table .head .val-head {
    background: linear-gradient(#fbdca6, #f2c26a);
    color: #660066;
}

.prop-table td.link {
    color: #0000ee;
}

.bar {
    display: inline-block;
    width: 13px;
    text-align: center;
}

.cur-row td {
    background: #d5e6f6;
}

.prop-table .cur-row td.no {
    background: #fdd698;
    color: #660066;
}

.cur-row td:nth-child(2) {
    background: #0078d7;
    color: #fff;
}

.cur-row td:last-child {
    background: #fff;
}

.cb {
    display: block;
    width: 13px;
    height: 13px;
    margin: 0 auto;
    border: 1px solid #333;
    background: #fff;
}

.prop-table td.style-cell {
    padding-left: 3px;
    color: #999;
}

.plus {
    display: inline-block;
    width: 13px;
    height: 13px;
    border: 1px solid #aaa;
    color: #333;
    line-height: 11px;
    text-align: center;
    margin-right: 4px;
    vertical-align: -2px;
}

/* 状态栏 */
.statusbar {
    height: 22px;
    display: flex;
    align-items: center;
    gap: 2px;
    padding: 1px 0 1px 0;
    white-space: nowrap;
}

.st {
    height: 19px;
    line-height: 17px;
    padding-left: 2px;
    background: #f2f2f2;
    border: 1px solid #e0e0e0;
}

.s0 { width: 148px; }
.s1 { width: 78px; }
.s2 { width: 98px; }
.s3 { width: 48px; }
.s4 { width: 914px; }
.s5 { flex: 1; }

/* 任务栏 */
.taskbar {
    height: 40px;
    background: #0a1416;
    display: flex;
    color: #fff;
}

.start {
    width: 48px;
    background: #000;
    display: flex;
    align-items: center;
    justify-content: center;
}

.start svg {
    width: 16px;
    height: 16px;
}

.task-search {
    width: 344px;
    background: #333;
    display: flex;
    align-items: center;
    padding-left: 9px;
    color: #999;
    font-size: 14px;
}

.cortana {
    width: 20px;
    height: 20px;
    margin-right: 7px;
}

.mic {
    width: 12px;
    height: 18px;
    margin-left: auto;
    margin-right: 15px;
}

.task-apps {
    width: 498px;
    display: flex;
    align-items: center;
    position: relative;
}

.t-view {
    width: 22px;
    height: 16px;
    margin-left: 13px;
    margin-right: 27px;
}

.t-app {
    width: 24px;
    height: 24px;
    margin-right: 25px;
}

.t-app.edge {
    margin-left: 7px;
}

.t-active {
    width: 48px;
    height: 40px;
    margin-left: -13px;
    background: #2d3b40;
    display: flex;
    align-items: center;
    justify-content: center;
}

.t-active svg {
    width: 24px;
    height: 24px;
}

.mark {
    position: absolute;
    bottom: 0;
    height: 2px;
    background: #76b9ed;
}

.m1 { left: 307px; width: 40px; }
.m2 { left: 356px; width: 40px; }
.m3 { left: 405px; width: 40px; }
.m4 { left: 450px; width: 48px; }

.tray {
    flex: 1;
    display: flex;
    align-items: center;
    padding-left: 134px;
    color: #e8e8e8;
}

.tray-link {
    margin-right: 11px;
    font-size: 12px;
}

.t-s1 {
    width: 14px;
    height: 8px;
    margin-right: 10px;
}

.t-s2 {
    width: 16px;
    height: 14px;
    margin-right: 9px;
}

.t-kb {
    width: 22px;
    height: 14px;
    margin-left: -4px;
}

.tray-ime {
    margin-left: 11px;
    font-size: 14px;
}

.t-s {
    width: 16px;
    height: 16px;
    margin-left: 12px;
}

.clock {
    width: 56px;
    margin-left: 20px;
    display: flex;
    flex-direction: column;
    align-items: center;
    font-family: "Noto Sans", sans-serif;
    line-height: 20px;
}

.t-note {
    width: 18px;
    height: 18px;
    margin-left: 19px;
}

/* 悬浮层 */
.ime-bar {
    position: absolute;
    left: 690px;
    top: 11px;
    display: flex;
    align-items: center;
}

.ime-logo {
    width: 28px;
    height: 28px;
    position: relative;
    z-index: 1;
}

.ime-items {
    width: 190px;
    height: 24px;
    margin-left: -13px;
    padding-left: 17px;
    background: #fff;
    border: 1px solid #b8c8d4;
    display: flex;
    align-items: center;
    gap: 6.5px;
}

.ime-items svg {
    width: 17px;
    height: 17px;
}

.ime-en {
    color: #2f7fd0;
    font-weight: 700;
    font-size: 14px;
}

.ime-punc {
    color: #2f7fd0;
    font-weight: 700;
    width: 17px;
    text-align: center;
}

.score-badge {
    position: absolute;
    left: 1013px;
    top: -27px;
    width: 44px;
    height: 44px;
    border-radius: 50%;
    background: #3cb54a;
    border: 2px solid #e0e6e0;
    box-shadow: 0 1px 2px #777;
    color: #fff;
    font-weight: 700;
    text-align: center;
}

.score-badge span {
    display: block;
    padding-top: 25px;
}

.marks {
    position: absolute;
    left: 0;
    top: 0;
    width: 1366px;
    height: 768px;
    pointer-events: none;
}
```
